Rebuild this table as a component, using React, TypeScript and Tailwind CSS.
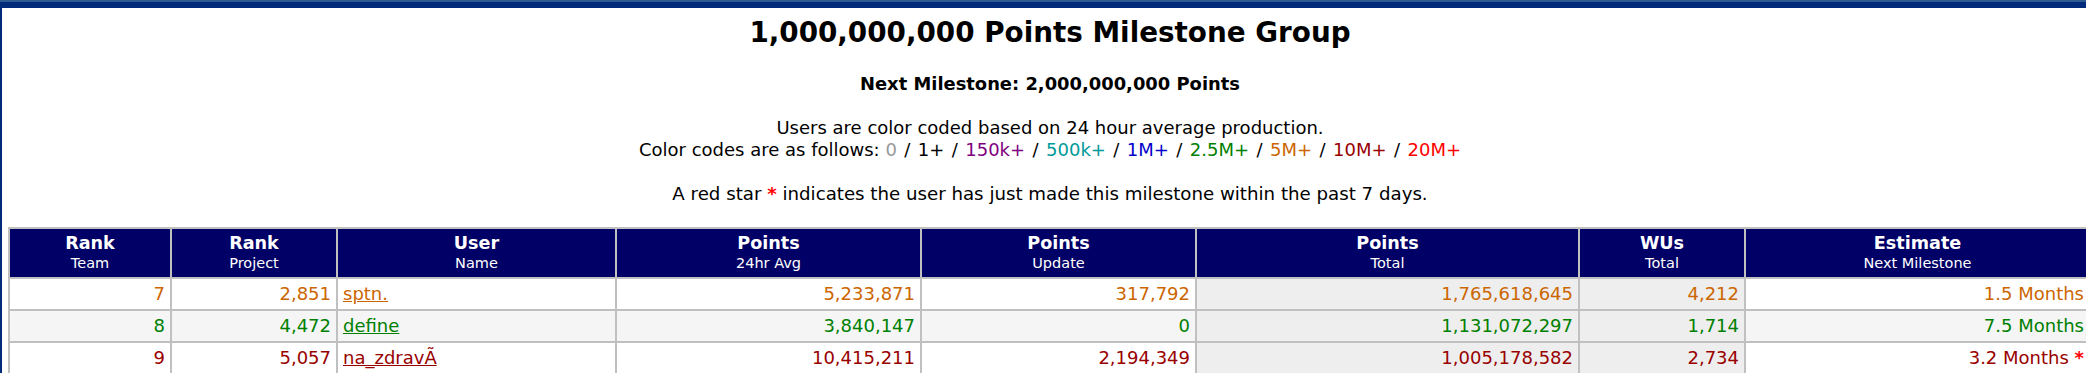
import React from "react";

type Row = {
  color: string;
  bg: string;
  cells: string[];
  star: boolean;
};

const rows: Row[] = [
  {
    color: "text-[#cc6600]",
    bg: "bg-white",
    cells: ["7", "2,851", "sptn.", "5,233,871", "317,792", "1,765,618,645", "4,212", "1.5 Months"],
    star: false,
  },
  {
    color: "text-[#008000]",
    bg: "bg-[#f5f5f5]",
    cells: ["8", "4,472", "define", "3,840,147", "0", "1,131,072,297", "1,714", "7.5 Months"],
    star: false,
  },
  {
    color: "text-[#990000]",
    bg: "bg-white",
    cells: ["9", "5,057", "na_zdravÃ", "10,415,211", "2,194,349", "1,005,178,582", "2,734", "3.2 Months"],
    star: true,
  },
];

const headers: [string, string][] = [
  ["Rank", "Team"],
  ["Rank", "Project"],
  ["User", "Name"],
  ["Points", "24hr Avg"],
  ["Points", "Update"],
  ["Points", "Total"],
  ["WUs", "Total"],
  ["Estimate", "Next Milestone"],
];

const codes: [string, string][] = [
  ["0", "text-[#999999]"],
  ["1+", "text-black"],
  ["150k+", "text-[#800080]"],
  ["500k+", "text-[#009999]"],
  ["1M+", "text-[#0000cc]"],
  ["2.5M+", "text-[#008000]"],
  ["5M+", "text-[#cc6600]"],
  ["10M+", "text-[#990000]"],
  ["20M+", "text-[#ff0000]"],
];

export default function App() {
  return (
    <div className="w-[2086px] h-[373px] overflow-hidden bg-white text-black font-['DejaVu_Sans',Verdana,sans-serif]">
      <div className="w-[2100px] border-t-2 border-[#305b92]">
        <div className="border-t-[6px] border-l-2 border-[#022a7a] h-[400px]">
          <div className="w-[2096px] text-center">
            <h1 className="pt-[9px] text-[27.8px] font-bold leading-[32px]">
              1,000,000,000 Points Milestone Group
            </h1>
            <p className="mt-[24px] text-[17.9px] font-bold leading-[22px]">
              Next Milestone: 2,000,000,000 Points
            </p>
            <p className="mt-[22px] text-[18px] leading-[22px]">
              Users are color coded based on 24 hour average production.
              <br />
              Color codes are as follows:{" "}
              {codes.map(([t, c], i) => (
                <React.Fragment key={i}>
                  {i > 0 ? (
                    <>
                      {" "}
                      <span className="mx-[1.7px]">/</span>{" "}
                    </>
                  ) : null}
                  <span className={c}>{t}</span>
                </React.Fragment>
              ))}
            </p>
            <p className="mt-[22px] text-[18.2px] leading-[22px]">
              A red star <span className="text-[#ff0000] font-bold">*</span> indicates the user has just made this
              milestone within the past 7 days.
            </p>
          </div>
          <div className="mt-[22px] pl-[6px]">
            <table className="border-collapse table-fixed w-[2081px]">
              <colgroup>
                <col className="w-[162px]" />
                <col className="w-[166px]" />
                <col className="w-[279px]" />
                <col className="w-[305px]" />
                <col className="w-[275px]" />
                <col className="w-[383px]" />
                <col className="w-[166px]" />
                <col className="w-[345px]" />
              </colgroup>
              <thead>
                <tr>
                  {headers.map(([a, b], i) => (
                    <th
                      key={i}
                      className="border-2 border-[#c0c0c0] bg-[#000066] text-white text-center py-[4px] px-[4px] leading-[20px] font-normal"
                    >
                      <div className="text-[17.6px] font-bold">{a}</div>
                      <div className="text-[14.5px]">{b}</div>
                    </th>
                  ))}
                </tr>
              </thead>
              <tbody>
                {rows.map((r, ri) => (
                  <tr key={ri} className={`${r.bg} ${r.color}`}>
                    {r.cells.map((c, ci) => {
                      const total = ci === 5 || ci === 6;
                      const align = ci === 2 ? "text-left" : "text-right";
                      return (
                        <td
                          key={ci}
                          className={`border-2 border-[#c0c0c0] px-[5px] py-[4px] text-[18px] leading-[22px] whitespace-nowrap ${align} ${
                            total ? "bg-[#eeeeee]" : ""
                          }`}
                        >
                          {ci === 2 ? (
                            <a href="#" className="underline">
                              {c}
                            </a>
                          ) : (
                            c
                          )}
                          {ci === 7 && r.star ? (
                            <>
                              {" "}
                              <span className="text-[#ff0000] font-bold">*</span>
                            </>
                          ) : null}
                        </td>
                      );
                    })}
                  </tr>
                ))}
              </tbody>
            </table>
          </div>
        </div>
      </div>
    </div>
  );
}
